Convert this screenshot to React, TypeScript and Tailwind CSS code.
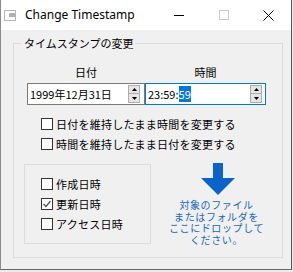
import React from 'react';

const jp = { fontFamily: '"Noto Sans CJK JP", "Noto Sans", sans-serif' };

function CheckBox({ label, checked = false }: { label: string; checked?: boolean }) {
  return (
    <div className="flex h-[16px] items-center">
      <span className="flex h-[12px] w-[12px] items-center justify-center border border-[#333] bg-white">
        {checked && (
          <svg width="10" height="10" viewBox="0 0 10 10">
            <path d="M1.5 5 L4 7.5 L8.5 2" fill="none" stroke="#555" strokeWidth="1.3" />
          </svg>
        )}
      </span>
      <span className="ml-[3px] text-[11px] leading-[12px] tracking-[0.25px] text-black">{label}</span>
    </div>
  );
}

function Spin() {
  return (
    <div className="flex flex-col">
      <span className="flex h-[9px] w-[12px] items-center justify-center border border-[#adadad] bg-[#e5e5e5]">
        <svg width="5" height="3" viewBox="0 0 5 3">
          <path d="M0 3 L2.5 0 L5 3 Z" fill="#000" />
        </svg>
      </span>
      <span className="-mt-px flex h-[10px] w-[12px] items-center justify-center border border-[#adadad] bg-[#e5e5e5]">
        <svg width="5" height="3" viewBox="0 0 5 3">
          <path d="M0 0 L2.5 3 L5 0 Z" fill="#000" />
        </svg>
      </span>
    </div>
  );
}

export default function App() {
  return (
    <div className="h-[272px] w-[293px] bg-[#ececec]" style={jp}>
      <div className="flex h-[270px] w-[292px] flex-col border-x border-b border-l-[#8a8a8a] border-r-[#555] border-b-[#666]">
        {/* title bar */}
        <div className="flex h-[30px] items-center bg-white">
          <div className="ml-[3px] flex h-[11px] w-[12px] items-start border border-[#b5b5b5] bg-white pl-[4px] pt-[2px]">
            <span className="h-[4px] w-[6px] bg-[#b0b0b0]" />
          </div>
          <span
            className="ml-[9px] text-[12px] text-black"
            style={{ fontFamily: '"Noto Sans", "Open Sans", sans-serif' }}
          >
            Change Timestamp
          </span>
          <div className="ml-auto flex h-full">
            <div className="flex w-[45px] items-center justify-center">
              <span className="h-px w-[10px] bg-black" />
            </div>
            <div className="flex w-[45px] items-center justify-center">
              <span className="h-[10px] w-[10px] border border-[#c8c8c8]" />
            </div>
            <div className="flex w-[45px] items-center justify-center">
              <svg width="11" height="11" viewBox="0 0 11 11">
                <path d="M0.5 0.5 L10.5 10.5 M10.5 0.5 L0.5 10.5" stroke="#000" strokeWidth="1" />
              </svg>
            </div>
          </div>
        </div>

        {/* body */}
        <div className="flex flex-1 flex-col bg-[#f0f0f0] pl-[12px] pr-[8px] pt-[7px]">
          <fieldset className="h-[221px] w-[270px] border border-[#dcdcdc]">
            <legend className="ml-[8px] px-[2px] text-[11px] leading-[12px] text-black">タイムスタンプの変更</legend>

            <div className="mt-[17px] flex pl-[13px]">
              <div className="flex w-[118px] flex-col items-center">
                <span className="text-[11px] leading-[12px] text-black">日付</span>
                <div className="mt-[5px] flex h-[22px] w-[118px] items-center border border-[#7a7a7a] bg-white pl-[2px] pr-[4px]">
                  <span className="flex-1 text-[11px] leading-[12px] text-black">1999年12月31日</span>
                  <Spin />
                </div>
              </div>
              <div className="flex w-[121px] flex-col items-center">
                <span className="text-[11px] leading-[12px] text-black">時間</span>
                <div className="mt-[5px] flex h-[22px] w-[121px] items-center border border-[#0078d7] bg-white pl-[2px] pr-[3px]">
                  <span className="flex-1 text-[11px] leading-[12px] text-black">
                    23:59:<span className="bg-[#0078d7] text-white">59</span>
                  </span>
                  <Spin />
                </div>
              </div>
            </div>

            <div className="mt-[11px] flex flex-col gap-[4px] pl-[27px]">
              <CheckBox label="日付を維持したまま時間を変更する" />
              <CheckBox label="時間を維持したまま日付を変更する" />
            </div>

            <div className="mt-[12px] flex pl-[10px]">
              <fieldset className="h-[80px] w-[127px] border border-[#dcdcdc]">
                <div className="flex flex-col gap-[4px] pl-[16px] pt-[11px]">
                  <CheckBox label="作成日時" />
                  <CheckBox label="更新日時" checked />
                  <CheckBox label="アクセス日時" />
                </div>
              </fieldset>
              <div className="-mt-px flex flex-1 flex-col items-center">
                <svg className="ml-[3px]" width="34" height="32" viewBox="0 0 34 32">
                  <polygon points="12,0 22,0 22,15 34,15 17,32 0,15 12,15" fill="#0b63c9" />
                </svg>
                <div className="mt-[4px] flex flex-col items-center text-[10px] leading-[11.5px] tracking-[0.6px] text-[#1767b7]">
                  <span>対象のファイル</span>
                  <span>またはフォルダを</span>
                  <span>ここにドロップして</span>
                  <span>ください。</span>
                </div>
              </div>
            </div>
          </fieldset>
        </div>
      </div>
    </div>
  );
}
